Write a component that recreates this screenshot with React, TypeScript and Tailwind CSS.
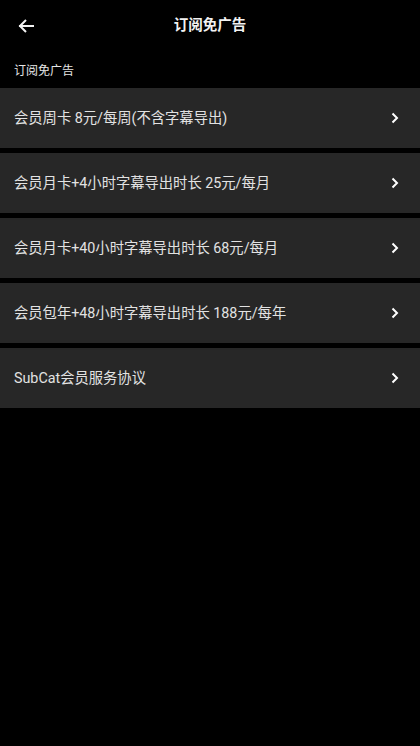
import React from "react";

const items = [
  "会员周卡 8元/每周(不含字幕导出)",
  "会员月卡+4小时字幕导出时长 25元/每月",
  "会员月卡+40小时字幕导出时长 68元/每月",
  "会员包年+48小时字幕导出时长 188元/每年",
  "SubCat会员服务协议",
];

export default function App() {
  return (
    <div
      className="w-[420px] h-[746px] bg-black text-white overflow-hidden"
      style={{ fontFamily: 'Roboto, "Noto Sans CJK SC", sans-serif' }}
    >
      <div className="relative h-[52px] flex items-center justify-center">
        <svg
          className="absolute left-[18px] top-[18px]"
          width="16"
          height="16"
          viewBox="0 0 16 16"
          fill="none"
          stroke="#f2f2f2"
          strokeWidth="2"
          strokeLinecap="square"
        >
          <path d="M15 8H2" />
          <path d="M8 2L2 8l6 6" strokeLinecap="butt" />
        </svg>
        <span className="text-[14.5px] font-bold text-[#f2f2f2] leading-none">订阅免广告</span>
      </div>
      <div className="h-[36px] px-[14px] pt-[11px] text-[12px] leading-[16px] text-[#e6e6e6]">
        订阅免广告
      </div>
      <div className="flex flex-col gap-[5px]">
        {items.map((t) => (
          <div
            key={t}
            className="h-[60px] bg-[#272727] flex items-center justify-between pl-[14px] pr-[21px]"
          >
            <span className="text-[14.3px] text-[#e2e2e2] leading-none">{t}</span>
            <svg
              width="8"
              height="12"
              viewBox="0 0 8 12"
              fill="none"
              stroke="#ffffff"
              strokeWidth="2"
            >
              <path d="M1.5 1.5L6 6l-4.5 4.5" />
            </svg>
          </div>
        ))}
      </div>
    </div>
  );
}
